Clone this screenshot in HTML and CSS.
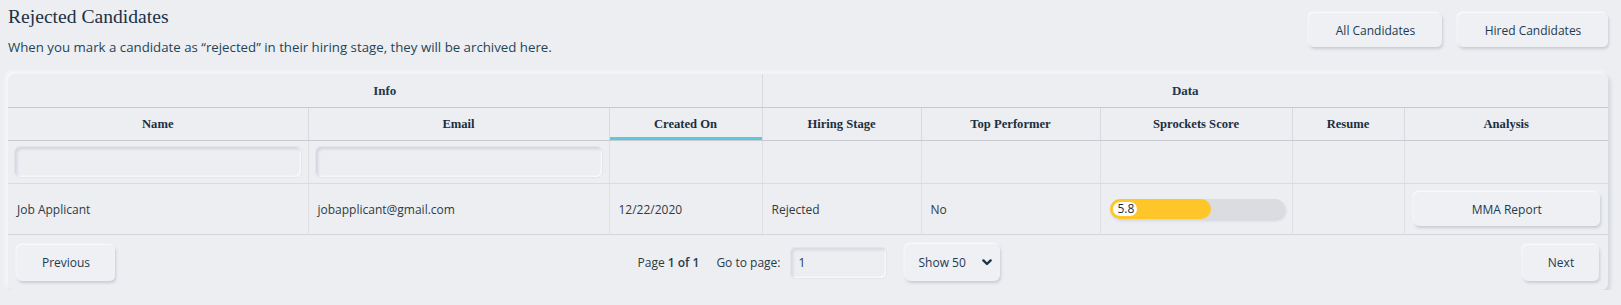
FILE: index.html
```html
<!DOCTYPE html>
<html lang="en">
<head>
<meta charset="UTF-8">
<meta name="viewport" content="width=device-width, initial-scale=1.0">
<title>Rejected Candidates</title>
<link rel="stylesheet" href="styles.css">
</head>
<body>
    <div class="pageHeader">
        <div class="intro">
            <h1>Rejected Candidates</h1>
            <p>When you mark a candidate as “rejected” in their hiring stage, they will be archived here.</p>
        </div>
        <div class="navButtons">
            <button class="softButton">All Candidates</button>
            <button class="softButton hired">Hired Candidates</button>
        </div>
    </div>

    <div class="tableCard">
        <table>
            <colgroup>
                <col style="width: 300px">
                <col style="width: 301px">
                <col style="width: 153px">
                <col style="width: 159px">
                <col style="width: 179px">
                <col style="width: 192px">
                <col style="width: 112px">
                <col style="width: 204px">
            </colgroup>
            <thead>
                <tr class="groupRow">
                    <th colspan="3">Info</th>
                    <th colspan="5">Data</th>
                </tr>
                <tr class="titleRow">
                    <th>Name</th>
                    <th>Email</th>
                    <th class="sorted">Created On</th>
                    <th>Hiring Stage</th>
                    <th>Top Performer</th>
                    <th>Sprockets Score</th>
                    <th>Resume</th>
                    <th>Analysis</th>
                </tr>
                <tr class="filterRow">
                    <td><input type="text" class="filterInput"></td>
                    <td><input type="text" class="filterInput"></td>
                    <td></td>
                    <td></td>
                    <td></td>
                    <td></td>
                    <td></td>
                    <td></td>
                </tr>
            </thead>
            <tbody>
                <tr class="dataRow">
                    <td>Job Applicant</td>
                    <td>jobapplicant@gmail.com</td>
                    <td>12/22/2020</td>
                    <td>Rejected</td>
                    <td>No</td>
                    <td>
                        <div class="scoreBar">
                            <div class="scoreFill" style="width: 58%">
                                <span class="scoreLabel">5.8</span>
                            </div>
                        </div>
                    </td>
                    <td></td>
                    <td><button class="softButton reportButton">MMA Report</button></td>
                </tr>
            </tbody>
        </table>

        <div class="pagination">
            <button class="softButton pageButton prev">Previous</button>
            <div class="pageCenter">
                <span class="pageInfo">Page <b>1 of 1</b></span>
                <span class="goTo">Go to page:</span>
                <input type="text" class="pageInput" value="1">
                <div class="pageSize">
                    <span>Show 50</span>
                    <svg width="10" height="7" viewBox="0 0 10 7"><path d="M1.4 1.4 L5 5 L8.6 1.4" fill="none" stroke="#1d3547" stroke-width="2.4" stroke-linecap="round" stroke-linejoin="round"/></svg>
                </div>
            </div>
            <button class="softButton pageButton next">Next</button>
        </div>
    </div>
</body>
</html>
```

FILE: styles.css
```css
body {
    margin: 0;
    padding: 0 13px 0 8px;
    background-color: #edeef2;
    font-family: "Open Sans", "Noto Sans", sans-serif;
    color: #2f3a44;
}

.pageHeader {
    display: flex;
    justify-content: space-between;
    align-items: flex-start;
    height: 74px;
}

h1 {
    margin: 5px 0 0 0;
    font-family: "Liberation Serif", serif;
    font-weight: normal;
    font-size: 19.6px;
    line-height: 24px;
    color: #1b3143;
}

.intro p {
    margin: 9px 0 0 0;
    font-size: 13.26px;
    line-height: 18px;
    color: #1e4556;
}

.navButtons {
    display: flex;
    gap: 16px;
    margin-top: 13px;
}

.softButton {
    font-family: "Open Sans", "Noto Sans", sans-serif;
    font-size: 12px;
    color: #1d3a50;
    background-color: #eef0f4;
    border: none;
    border-radius: 5px;
    height: 34px;
    padding: 0 20px;
    box-shadow: 1px 2px 3px rgba(40, 50, 80, 0.18), -1px -1px 2px rgba(255, 255, 255, 0.9);
    cursor: pointer;
}

.navButtons .softButton {
    width: 133px;
}

.navButtons .hired {
    width: 150px;
}

/* tabela */
.tableCard {
    width: 1600px;
    background-color: #eceef2;
    border-radius: 6px;
    box-shadow: 2px 2px 4px rgba(40, 50, 80, 0.15), -2px -2px 4px rgba(255, 255, 255, 0.8);
    overflow: hidden;
}

table {
    width: 100%;
    border-collapse: collapse;
    table-layout: fixed;
}

th {
    font-family: "Liberation Serif", serif;
    font-weight: bold;
    font-size: 12.6px;
    color: #1c2e3e;
    text-align: center;
    padding: 0;
}

.groupRow th {
    height: 33px;
    font-size: 13px;
    color: #22384a;
    border-bottom: 1px solid #c9cacf;
}

.groupRow th:first-child {
    border-right: 1px solid #d9dadf;
}

.titleRow th {
    height: 32px;
    border-bottom: 1px solid #c9cacf;
    border-right: 1px solid #d9dadf;
}

.titleRow th.sorted {
    box-shadow: inset 0 -3px 0 #5cc8da;
}

.titleRow th:last-child,
.filterRow td:last-child,
.dataRow td:last-child {
    border-right: none;
}

.filterRow td {
    height: 42px;
    padding: 0 6px;
    border-bottom: 1px solid #dadbe0;
    border-right: 1px solid #dfe0e4;
}

.filterInput {
    display: block;
    width: 100%;
    height: 32px;
    box-sizing: border-box;
    background-color: #eceef2;
    border: 1px solid #e4e5ea;
    border-radius: 6px;
    box-shadow: inset 2px 2px 3px rgba(60, 60, 110, 0.14), inset -1px -1px 2px rgba(255, 255, 255, 0.9);
}

.dataRow td {
    height: 50px;
    padding: 0 8px 0 9px;
    font-size: 12px;
    color: #2f3a44;
    border-bottom: 1px solid #d5d6db;
    border-right: 1px solid #dfe0e4;
}

.scoreBar {
    width: 175px;
    height: 20px;
    border-radius: 10px;
    background-color: #dbdce0;
    box-shadow: 1px 2px 3px rgba(40, 50, 80, 0.12);
}

.scoreFill {
    height: 100%;
    border-radius: 10px;
    background-color: #ffc629;
    display: flex;
    align-items: center;
    padding-left: 1px;
    box-sizing: border-box;
}

.scoreLabel {
    display: inline-block;
    height: 14px;
    line-height: 14px;
    padding: 0 3px 0 5px;
    background-color: #fff;
    border: 2px solid #ffc629;
    border-radius: 9px;
    font-size: 12px;
    color: #1f2a36;
}

.reportButton {
    width: 100%;
    font-size: 12px;
}

/* paginação */
.pagination {
    display: flex;
    align-items: center;
    height: 55px;
    padding: 0 9px 0 9px;
}

.pageButton {
    height: 36px;
}

.prev {
    width: 98px;
}

.next {
    width: 76px;
}

.pageCenter {
    flex: 1;
    display: flex;
    justify-content: center;
    align-items: center;
    font-size: 12px;
    color: #2b3a46;
}

.pageInfo b {
    font-weight: 600;
}

.goTo {
    margin-left: 17px;
}

.pageInput {
    margin-left: 10px;
    width: 97px;
    height: 32px;
    box-sizing: border-box;
    padding: 0 7px;
    font-family: "Open Sans", "Noto Sans", sans-serif;
    font-size: 12px;
    color: #2b3a46;
    background-color: #eceef2;
    border: 1px solid #e4e5ea;
    border-radius: 5px;
    box-shadow: inset 2px 2px 3px rgba(60, 60, 110, 0.12), inset -1px -1px 2px rgba(255, 255, 255, 0.9);
}

.pageSize {
    margin-left: 18px;
    width: 95px;
    height: 37px;
    box-sizing: border-box;
    padding: 0 8px 0 13px;
    display: flex;
    justify-content: space-between;
    align-items: center;
    background-color: #eef0f4;
    border-radius: 6px;
    box-shadow: 1px 2px 3px rgba(40, 50, 80, 0.18), -1px -1px 2px rgba(255, 255, 255, 0.9);
    color: #1d3a50;
}
```
